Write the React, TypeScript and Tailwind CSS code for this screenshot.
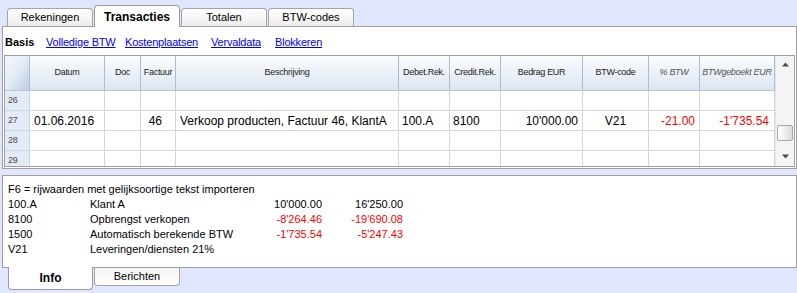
const gridCols =
  "grid grid-cols-[25px_75px_36px_35px_223px_51px_51px_82px_66px_51px_75px]";

const headers = [
  { label: "Datum" },
  { label: "Doc" },
  { label: "Factuur" },
  { label: "Beschrijving" },
  { label: "Debet.Rek." },
  { label: "Credit.Rek." },
  { label: "Bedrag EUR" },
  { label: "BTW-code" },
  { label: "% BTW", italic: true },
  { label: "BTWgeboekt EUR", italic: true },
];

function TopTab({ label, active }: { label: string; active?: boolean }) {
  if (active) {
    return (
      <div className="relative z-10 -mb-px flex h-[22px] w-[86px] items-center justify-center rounded-t-[4px] border border-b-0 border-[#9c9c9c] bg-white text-[12px] font-bold text-black">
        {label}
      </div>
    );
  }
  return (
    <div className="flex h-[18px] w-[86px] items-center justify-center rounded-t-[4px] border border-b-0 border-[#a5a5a5] bg-gradient-to-b from-[#ffffff] to-[#ececec] text-[11px] text-black">
      {label}
    </div>
  );
}

function Row({ n, cells }: { n: number; cells?: React.ReactNode[] }) {
  const c = cells ?? [];
  const base = "h-[20px] border-r border-b border-[#d6d6d6] flex items-center text-[12px] leading-none";
  return (
    <div className={gridCols}>
      <div className="flex h-[20px] items-center border-r border-b border-[#c9d6e4] bg-[#e2ebf6] pl-[3px] text-[9px] tracking-[-0.3px] text-[#4a4a4a]">
        {n}
      </div>
      <div className={`${base} pl-[4px]`}>{c[0]}</div>
      <div className={base}></div>
      <div className={`${base} justify-end pr-[13px]`}>{c[1]}</div>
      <div className={`${base} pl-[4px]`}>{c[2]}</div>
      <div className={`${base} pl-[3px]`}>{c[3]}</div>
      <div className={`${base} pl-[3px]`}>{c[4]}</div>
      <div className={`${base} justify-end pr-[4px]`}>{c[5]}</div>
      <div className={`${base} justify-center`}>{c[6]}</div>
      <div className={`${base} justify-end pr-[4px] text-[#ff0000]`}>{c[7]}</div>
      <div className={`${base} justify-end pr-[5px] text-[#ff0000]`}>{c[8]}</div>
    </div>
  );
}

export default function App() {
  return (
    <div className="h-[293px] w-[797px] overflow-hidden bg-[#dfe6fe] font-['Liberation_Sans',Arial,sans-serif] text-black">
      {/* top tabs */}
      <div className="flex h-[26px] items-end gap-px pl-[7px]">
        <TopTab label="Rekeningen" />
        <TopTab label="Transacties" active />
        <TopTab label="Totalen" />
        <TopTab label="BTW-codes" />
      </div>

      {/* main panel */}
      <div className="ml-[2px] h-[143px] w-[795px] border border-[#a0a0a0] bg-white">
        <div className="flex h-[28px] items-end pb-[5px] pl-[2px] text-[11px] tracking-[-0.2px]">
          <span className="w-[41px] shrink-0 font-bold tracking-normal">Basis</span>
          <span className="w-[79px] shrink-0">
            <a className="text-[#0000ff] underline">Volledige BTW</a>
          </span>
          <span className="w-[86px] shrink-0">
            <a className="text-[#0000ff] underline">Kostenplaatsen</a>
          </span>
          <span className="w-[64px] shrink-0">
            <a className="text-[#0000ff] underline">Vervaldata</a>
          </span>
          <a className="text-[#0000ff] underline">Blokkeren</a>
        </div>

        <div className="ml-[1px] flex h-[112px] w-[791px] border border-[#a0a0a0]">
          <div className="w-[770px]">
            <div className={`${gridCols} h-[35px] border-b border-[#b3c6da]`}>
              <div className="border-r border-[#a7bfd6] bg-gradient-to-br from-[#f3f7fc] via-[#e2ebf5] to-[#b9cde3]"></div>
              {headers.map((h) => (
                <div
                  key={h.label}
                  className={`flex items-center justify-center border-r border-[#a7bfd6] bg-gradient-to-b from-[#fbfdff] to-[#dce5f1] text-[9px] tracking-[-0.3px] ${
                    h.italic ? "italic text-[#555555]" : "text-[#222222]"
                  }`}
                >
                  {h.label}
                </div>
              ))}
            </div>
            <div className="h-[75px] overflow-hidden">
              <Row n={26} />
              <Row
                n={27}
                cells={[
                  "01.06.2016",
                  "46",
                  "Verkoop producten, Factuur 46, KlantA",
                  "100.A",
                  "8100",
                  "10'000.00",
                  "V21",
                  "-21.00",
                  "-1'735.54",
                ]}
              />
              <Row n={28} />
              <Row n={29} />
            </div>
          </div>

          {/* scrollbar */}
          <div className="flex w-[19px] flex-col items-center border-l border-[#e6e6e6] bg-[#f4f4f4]">
            <svg width="9" height="5" viewBox="0 0 9 5" className="mt-[6px]">
              <path d="M4.5 0.5 L8 4.5 L1 4.5 Z" fill="#4a4a4a" />
            </svg>
            <div className="mt-[58px] h-[16px] w-[16px] rounded-[2px] border border-[#a6a6a6] bg-gradient-to-r from-[#ffffff] to-[#dcdcdc]"></div>
            <svg width="9" height="5" viewBox="0 0 9 5" className="mt-[13px]">
              <path d="M1 0.5 L8 0.5 L4.5 4.5 Z" fill="#4a4a4a" />
            </svg>
          </div>
        </div>
      </div>

      {/* info panel */}
      <div className="ml-[2px] mt-[6px] h-[93px] w-[795px] border border-[#a0a0a0] bg-white pl-[5px] pt-[6px] text-[11px] leading-[15px]">
        <div>F6 = rijwaarden met gelijksoortige tekst importeren</div>
        <div className="grid grid-cols-[82px_150px_82px_81px]">
          <span>100.A</span>
          <span>Klant A</span>
          <span className="text-right">10'000.00</span>
          <span className="text-right">16'250.00</span>
          <span>8100</span>
          <span>Opbrengst verkopen</span>
          <span className="text-right text-[#ff0000]">-8'264.46</span>
          <span className="text-right text-[#ff0000]">-19'690.08</span>
          <span>1500</span>
          <span>Automatisch berekende BTW</span>
          <span className="text-right text-[#ff0000]">-1'735.54</span>
          <span className="text-right text-[#ff0000]">-5'247.43</span>
          <span>V21</span>
          <span>Leveringen/diensten 21%</span>
          <span></span>
          <span></span>
        </div>
      </div>

      {/* bottom tabs */}
      <div className="-mt-px flex gap-px pl-[8px]">
        <div className="relative z-10 flex h-[23px] w-[85px] items-center justify-center rounded-b-[4px] border border-t-0 border-[#9c9c9c] bg-white text-[12px] font-bold">
          Info
        </div>
        <div className="mt-px flex h-[18px] w-[86px] items-center justify-center rounded-b-[4px] border border-t-0 border-[#a5a5a5] bg-gradient-to-b from-[#f4f4f4] to-[#ffffff] text-[11px]">
          Berichten
        </div>
      </div>
    </div>
  );
}
